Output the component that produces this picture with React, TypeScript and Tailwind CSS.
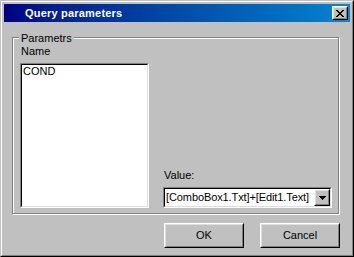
import React from "react";

function Raised({ className = "", children }: { className?: string; children?: React.ReactNode }) {
  return (
    <div className={`border border-t-white border-l-white border-r-black border-b-black ${className}`}>
      <div className="w-full h-full border border-t-[#dfdfdf] border-l-[#dfdfdf] border-r-[#808080] border-b-[#808080] bg-[#c0c0c0] flex items-center justify-center">
        {children}
      </div>
    </div>
  );
}

function Sunken({ className = "", children }: { className?: string; children?: React.ReactNode }) {
  return (
    <div className={`border border-t-[#808080] border-l-[#808080] border-r-white border-b-white ${className}`}>
      <div className="w-full h-full border border-t-black border-l-black border-r-[#dfdfdf] border-b-[#dfdfdf] bg-white">
        {children}
      </div>
    </div>
  );
}

function CloseGlyph() {
  const rows = [
    [0, 1, 6, 7],
    [1, 2, 5, 6],
    [2, 3, 4, 5],
    [3, 4],
    [2, 3, 4, 5],
    [1, 2, 5, 6],
    [0, 1, 6, 7],
  ];
  return (
    <svg width="8" height="7" viewBox="0 0 8 7" shapeRendering="crispEdges">
      {rows.map((cols, y) =>
        cols.map((x) => <rect key={`${x}-${y}`} x={x} y={y} width="1" height="1" fill="#000" />)
      )}
    </svg>
  );
}

function DownArrow() {
  return (
    <svg width="7" height="4" viewBox="0 0 7 4" shapeRendering="crispEdges">
      <rect x="0" y="0" width="7" height="1" fill="#000" />
      <rect x="1" y="1" width="5" height="1" fill="#000" />
      <rect x="2" y="2" width="3" height="1" fill="#000" />
      <rect x="3" y="3" width="1" height="1" fill="#000" />
    </svg>
  );
}

export default function App() {
  return (
    <div className="w-[354px] h-[257px] bg-[#c0c0c0] font-['Liberation_Sans',Arial,sans-serif] text-[11px] leading-[13px] text-black">
      <div className="w-full h-full border border-t-[#c0c0c0] border-l-[#c0c0c0] border-r-black border-b-black">
        <div className="w-full h-full border border-t-white border-l-white border-r-[#808080] border-b-[#808080] p-[2px] flex flex-col">
          {/* Title bar */}
          <div className="h-[18px] shrink-0 flex items-center bg-gradient-to-r from-[#000080] to-[#1084d0] pl-[21px] pr-[2px]">
            <span className="flex-1 text-white font-bold text-[11px] tracking-[0.2px]">Query parameters</span>
            <Raised className="w-[16px] h-[14px]">
              <CloseGlyph />
            </Raised>
          </div>

          {/* Client */}
          <div className="flex flex-col">
            {/* Group box */}
            <div className="relative ml-[8px] mt-[15px] w-[327px] h-[177px] border border-[#808080] shadow-[inset_1px_1px_0_#fff,1px_1px_0_#fff] flex pl-[7px] pt-[7px] pb-[5px]">
              <span className="absolute left-[6px] top-[-6px] px-[2px] bg-[#c0c0c0]">Parametrs</span>
              <div className="flex flex-col">
                <span className="pl-[1px] h-[13px]">Name</span>
                <Sunken className="mt-[5px] w-[129px] h-[145px]">
                  <div className="pl-[1px]">COND</div>
                </Sunken>
              </div>
              <div className="ml-[14px] flex flex-col justify-end">
                <span className="pl-[1px] mb-[5px]">Value:</span>
                <Sunken className="w-[169px] h-[21px]">
                  <div className="w-full h-full flex items-center">
                    <span className="flex-1 pl-[1px] tracking-[-0.1px] whitespace-nowrap overflow-hidden">
                      [ComboBox1.Txt]+[Edit1.Text]
                    </span>
                    <Raised className="w-[16px] h-[17px] shrink-0">
                      <DownArrow />
                    </Raised>
                  </div>
                </Sunken>
              </div>
            </div>

            {/* Buttons */}
            <div className="flex mt-[9px] ml-[160px] gap-[16px]">
              <Raised className="w-[80px] h-[25px]">
                <span>OK</span>
              </Raised>
              <Raised className="w-[80px] h-[25px]">
                <span>Cancel</span>
              </Raised>
            </div>
          </div>
        </div>
      </div>
    </div>
  );
}
